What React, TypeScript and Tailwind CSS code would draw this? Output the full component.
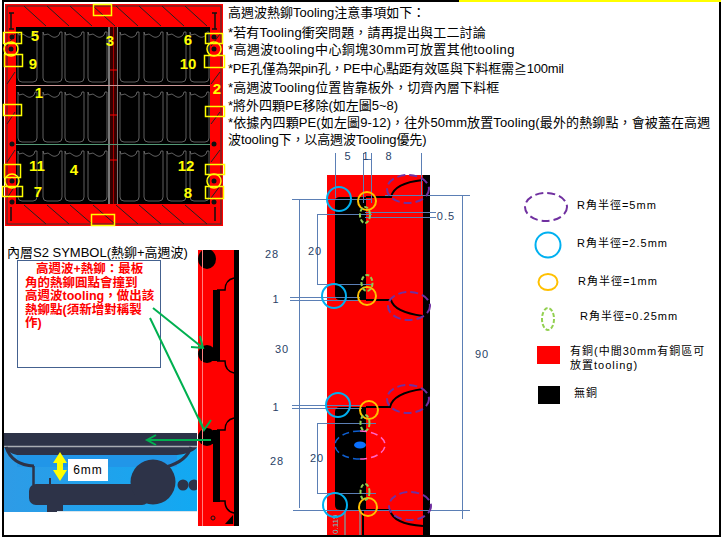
const LINE = "#5b7fb5";

const notes = [
  { text: "*若有Tooling衝突問題，請再提出與工二討論", cls: "mt-[3px] tracking-[0.15px]" },
  { text: "*高週波tooling中心銅塊30mm可放置其他tooling", cls: "tracking-[0.42px]" },
  { text: "*PE孔僅為架pin孔，PE中心點距有效區與下料框需≧100mil", cls: "mt-[2px] tracking-[-0.2px]" },
  { text: "*高週波Tooling位置皆靠板外，切齊內層下料框", cls: "mt-[2px] tracking-[0.17px]" },
  { text: "*將外四顆PE移除(如左圖5~8)", cls: "mt-[1px]" },
  { text: "*依據內四顆PE(如左圖9-12)，往外50mm放置Tooling(最外的熱鉚點，會被蓋在高週", cls: "tracking-[0.12px]" },
  { text: "波tooling下，以高週波Tooling優先)", cls: "tracking-[-0.1px]" },
];

const panelCols = [17, 42, 64, 87, 119, 143, 166, 189];
const panelRows = [31, 91, 150];
const panelRects = [
  [93, 4, 18, 11], [3, 32, 18, 11], [4, 54, 18, 12], [3, 104, 18, 11], [4, 164, 16, 13], [2, 186, 20, 10],
  [205, 33, 17, 10], [204, 55, 20, 12], [205, 106, 19, 10], [205, 164, 19, 10], [205, 186, 18, 12], [91, 214, 23, 11],
];
const panelNums: [string, number, number][] = [
  ["5", 35, 41], ["3", 110, 46], ["6", 188, 45], ["9", 33, 69], ["10", 188, 69], ["1", 39, 98],
  ["2", 217, 94], ["11", 37, 171], ["4", 74, 175], ["12", 186, 171], ["7", 38, 197], ["8", 188, 198],
];

function PanelDrawing() {
  return (
    <svg width="226" height="228" className="-ml-[4px] -mt-[2px] block shrink-0">
      <rect x="5" y="4" width="218" height="222" fill="#ff0000" />
      <rect x="7" y="6" width="214" height="218" fill="none" stroke="#333" strokeWidth="1" />
      {[0, 1, 2, 3, 4, 5, 6, 7].map((i) => (
        <g key={i} stroke="#222" strokeWidth="1">
          <line x1={24 + i * 23} y1="6" x2={46 + i * 23} y2="26" />
          <line x1={24 + i * 23} y1="205" x2={46 + i * 23} y2="224" />
        </g>
      ))}
      {[34, 72, 112, 150, 186].map((y) => (
        <g key={y} stroke="#222" strokeWidth="1">
          <line x1="15" y1={y} x2="7" y2={y + 12} />
          <line x1="220" y1={y} x2="211" y2={y + 12} />
        </g>
      ))}
      <path d="M11 13v16M9 13h5M9 29h5M215 13v16M212 13h5M212 29h5M11 207v14M215 207v14" stroke="#111" strokeWidth="1.5" fill="none" />
      <rect x="16" y="27" width="194" height="177" fill="#000" />
      <rect x="108" y="27" width="10" height="177" fill="#777" />
      <rect x="110" y="27" width="7" height="177" fill="#300" />
      <line x1="113.500" y1="27" x2="113.500" y2="204" stroke="#a00" />
      {[70, 115, 160].map((y) => (
        <line key={y} x1="110" y1={y} x2="117" y2={y} stroke="#f00" />
      ))}
      <line x1="16" y1="85.500" x2="210" y2="85.500" stroke="#c99" />
      <line x1="16" y1="144.500" x2="210" y2="144.500" stroke="#597" />
      {panelRows.map((y) =>
        panelCols.map((x) => (
          <path
            key={`${x}-${y}`}
            d={`M${x + 1} ${y + 1}v46q0 4 4 4h11q4 0 4-4v-46h-2l-1 3q-4 4-8 1l-3-2-4 1-1-3z`}
            fill="none"
            stroke="#777"
            strokeWidth="0.8"
          />
        )),
      )}
      {[17, 124, 182, 17, 124, 182].map((y, i) => (
        <circle key={i} cx={i < 3 ? 12 : 214} cy={y + 20} r="2.500" fill="#111" />
      ))}
      {panelRects.map(([x, y, w, h], i) => (
        <rect key={i} x={x + 0.5} y={y + 0.5} width={w} height={h} fill="none" stroke="#ffff00" strokeWidth="1.500" />
      ))}
      {[[11, 49], [12, 181], [214, 49], [214, 181]].map(([cx, cy], i) => (
        <g key={i}>
          <circle cx={cx} cy={cy} r="2.500" fill="#111" />
          <circle cx={cx} cy={cy} r="7" fill="none" stroke="#ffff00" strokeWidth="1.500" />
        </g>
      ))}
      {panelNums.map(([t, x, y]) => (
        <text key={t} x={x} y={y} textAnchor="middle" fontSize="15" fontWeight="700" fill="#ffff00" fontFamily="'Liberation Sans', sans-serif">
          {t}
        </text>
      ))}
    </svg>
  );
}

function PhotoDrawing() {
  return (
    <svg width="193" height="79" className="block">
      <defs>
        <linearGradient id="photoBlue" x1="0" y1="0" x2="1" y2="0">
          <stop offset="0" stopColor="#2e9be6" />
          <stop offset="1" stopColor="#12a9f2" />
        </linearGradient>
      </defs>
      <rect width="193" height="79" fill="url(#photoBlue)" />
      <rect y="22" x="13" width="160" height="12" fill="#2196e8" />
      <path d="M0 0H193V14Q190 20 173 22H13Q4 20 0 14Z" fill="#2d3348" />
      <line x1="0" y1="13.500" x2="193" y2="13.500" stroke="#a9adb3" strokeWidth="1.500" />
      <path d="M2 14Q8 32 30 33M187 14Q183 28 162 34" fill="none" stroke="#2d3348" strokeWidth="3" />
      <line x1="29.500" y1="33" x2="29.500" y2="52" stroke="#2d3348" strokeWidth="2.500" />
      <rect x="25" y="51" width="120" height="21" rx="7" fill="#2d3348" />
      <circle cx="149" cy="49" r="22.500" fill="#2d3348" />
      <rect x="45" y="45" width="2" height="7" fill="#2d3348" />
      <rect x="43" y="72" width="16" height="7" fill="#2d3348" />
      <circle cx="179" cy="52" r="5.500" fill="#2d3348" />
      <circle cx="190" cy="52" r="5.500" fill="#2d3348" />
      <line x1="53" y1="78.500" x2="193" y2="78.500" stroke="#d8e4ec" />
      <path d="M56 19L63 30H59V37H63L56 48L49 37H53V30H49Z" fill="#ffff00" />
    </svg>
  );
}

function StripDrawing() {
  return (
    <svg width="42" height="277" className="block">
      <rect width="41" height="276" fill="#ff0000" />
      <rect x="36" width="5" height="276" fill="#000" />
      <ellipse cx="9" cy="9" rx="9" ry="10" fill="#000" />
      <circle cx="9" cy="104" r="9" fill="#000" />
      <circle cx="9" cy="187" r="9" fill="#000" />
      <path d="M15 40h7v71h-7zM15 180h7v72h-7z" fill="#000" />
      <path d="M19 40h8q0-10 9-12M19 111h8q0 10 9 12M19 180h8q0-10 9-12M19 251h8q0 10 9 12" fill="none" stroke="#000" strokeWidth="1.500" />
      <line x1="4.500" y1="0" x2="4.500" y2="276" stroke="#ff8080" />
      <circle cx="15" cy="268" r="2" fill="none" stroke="#111" />
      <path d="M27 274l8-9v9z" fill="#000" />
    </svg>
  );
}

function DimText({ x, y, children }: { x: number; y: number; children: string }) {
  return (
    <text x={x} y={y} textAnchor="middle" fontSize="11" letterSpacing="1" fill="#2a3f66" fontFamily="'Liberation Sans', sans-serif">
      {children}
    </text>
  );
}

// origin of this drawing is (262,150) on the page
function DimensionDrawing() {
  const blue = [[77, 49], [72, 146], [76, 255], [73, 355]];
  const orange = [[105, 51], [105, 146], [107, 260], [106, 357]];
  const green = [[103, 65, 5, 8], [105, 133, 5.5, 8], [103, 273, 4.5, 8], [103, 342, 4.5, 8]];
  const purple = [[146, 39], [147, 156], [146, 249], [148, 356]];
  return (
    <svg width="240" height="385" className="block">
      <rect x="65" y="25" width="103" height="360" fill="#ff0000" />
      <rect x="161" y="25" width="7" height="360" fill="#000" />
      <path d="M78 47h26v103H78q-5 0-5-5V52q0-5 5-5zM78 257h26v103H78q-5 0-5-5V262q0-5 5-5z" fill="#000" />
      <path d="M104 47h25q3-14 32-17M104 150h25q3 12 32 16M104 257h24q3-14 33-18M104 360h24q3 14 33 16M101 360v25" fill="none" stroke="#000" strokeWidth="2" />
      <path d="M83 360v25M98 360v25" fill="none" stroke="#55cccc" strokeWidth="1" />
      <text transform="translate(76 384) rotate(-90)" fontSize="8" fill="#55cccc" fontFamily="'Liberation Sans', sans-serif">0.119</text>
      <g stroke={LINE} strokeWidth="1" fill="none">
        <path d="M73.500 3v45M101.500 3v50M109.500 3v50M159.500 3v42M101 9.500h9" />
        <path d="M30 49.500h80M123 45.500h85M37.500 49v309M200.500 45v324M31 360.500h177" />
        <path d="M103 62.500h71M103 67.500h71M55.500 64v70M55 64.500h55M55 134.500h55" />
        <path d="M28 147.500h70M28 150.500h70M30 255.500h70M30 258.500h70" />
        <path d="M55.500 273v70M55 273.500h59M55 343.500h59" />
      </g>
      {blue.map(([cx, cy]) => (
        <circle key={cy} cx={cx} cy={cy} r="12" fill="none" stroke="#00b0f0" strokeWidth="2" />
      ))}
      {orange.map(([cx, cy]) => (
        <circle key={cy} cx={cx} cy={cy} r="9" fill="none" stroke="#ffc000" strokeWidth="2" />
      ))}
      {green.map(([cx, cy, rx, ry]) => (
        <ellipse key={cy} cx={cx} cy={cy} rx={rx} ry={ry} fill="none" stroke="#92d050" strokeWidth="2" strokeDasharray="4 2" />
      ))}
      {purple.map(([cx, cy]) => (
        <ellipse key={cy} cx={cx} cy={cy} rx="21" ry="14" fill="none" stroke="#7030a0" strokeWidth="2" strokeDasharray="8 4" />
      ))}
      <path d="M98 281A25 14 0 0 0 98 309" fill="none" stroke="#0f5fd0" strokeWidth="1.500" strokeDasharray="7 4" />
      <path d="M98 281A25 14 0 0 1 98 309" fill="none" stroke="#ff66cc" strokeWidth="1.500" strokeDasharray="7 4" />
      <ellipse cx="98" cy="295" rx="6" ry="3.500" fill="#0a70ff" />
      <DimText x={86} y={10}>5</DimText>
      <DimText x={104} y={10}>1</DimText>
      <DimText x={127} y={10}>8</DimText>
      <DimText x={184} y={70}>0.5</DimText>
      <DimText x={10} y={108}>28</DimText>
      <DimText x={53} y={105}>20</DimText>
      <DimText x={14} y={153}>1</DimText>
      <DimText x={20} y={203}>30</DimText>
      <DimText x={14} y={261}>1</DimText>
      <DimText x={15} y={315}>28</DimText>
      <DimText x={55} y={312}>20</DimText>
      <DimText x={220} y={208}>90</DimText>
    </svg>
  );
}

function Legend() {
  return (
    <div className="flex w-[190px] flex-col text-[11px] leading-[14px] tracking-[1px] whitespace-nowrap text-black">
      <div className="flex h-[30px] items-center">
        <svg width="46" height="30" className="shrink-0">
          <ellipse cx="23" cy="15" rx="21" ry="14" fill="none" stroke="#7030a0" strokeWidth="2" strokeDasharray="8 4" />
        </svg>
        <span className="ml-[8px] -translate-y-[2px]">R角半徑=5mm</span>
      </div>
      <div className="mt-[9px] flex h-[28px] items-center">
        <svg width="46" height="28" className="shrink-0">
          <circle cx="25" cy="14" r="12.500" fill="none" stroke="#00b0f0" strokeWidth="2" />
        </svg>
        <span className="ml-[8px] -translate-y-[2px]">R角半徑=2.5mm</span>
      </div>
      <div className="mt-[13px] flex h-[20px] items-center">
        <svg width="46" height="20" className="shrink-0">
          <ellipse cx="25" cy="10" rx="9.500" ry="8" fill="none" stroke="#ffc000" strokeWidth="2" />
        </svg>
        <span className="ml-[9px] -translate-y-[1px]">R角半徑=1mm</span>
      </div>
      <div className="mt-[14px] flex h-[26px] items-center">
        <svg width="46" height="26" className="shrink-0">
          <ellipse cx="25" cy="13" rx="6" ry="11" fill="none" stroke="#92d050" strokeWidth="2" strokeDasharray="4 2" />
        </svg>
        <span className="ml-[11px] -translate-y-[3px]">R角半徑=0.25mm</span>
      </div>
      <div className="mt-[12px] flex items-start">
        <div className="ml-[14px] mt-[2px] h-[18px] w-[23px] shrink-0 bg-[#ff0000]" />
        <span className="ml-[10px]">
          有銅(中間30mm有銅區可
          <br />
          放置tooling)
        </span>
      </div>
      <div className="mt-[14px] flex items-center">
        <div className="ml-[15px] h-[18px] w-[22px] shrink-0 bg-black" />
        <span className="ml-[14px] -translate-y-[2px]">無銅</span>
      </div>
    </div>
  );
}

function LeftColumn() {
  return (
    <div className="flex w-[224px] shrink-0 flex-col">
      <PanelDrawing />
      <div className="ml-[3px] mt-[17px] text-[13px] leading-[16px] whitespace-nowrap">內層S2 SYMBOL(熱鉚+高週波)</div>
      <div className="ml-[13px] -mt-[1px] h-[108px] w-[144px] border border-[#44618f] pl-[7px] pt-[2px] text-[12.500px] leading-[13.500px] font-bold whitespace-nowrap text-[#ff0000]">
        <span className="ml-[11px]">高週波+熱鉚：最板</span>
        <br />角的熱鉚圓點會撞到
        <br />高週波tooling，做出該
        <br />熱鉚點(須新增對稱製
        <br />作)
      </div>
      <div className="relative mt-[65px] h-[79px] w-[193px]">
        <PhotoDrawing />
        <div className="absolute left-[64px] top-[26px] flex h-[22px] w-[40px] items-center justify-center bg-white text-[12px] tracking-[1px]">6mm</div>
      </div>
    </div>
  );
}

export default function App() {
  return (
    <div className="relative h-[537px] w-[721px] overflow-hidden bg-white font-['Liberation_Sans','Noto_Sans_CJK_TC',sans-serif] text-black">
      <div className="ml-[2px] flex h-[537px] w-[719px] border-2 border-black">
        <LeftColumn />
        <div className="flex min-w-0 flex-1 flex-col">
          <div className="pt-[2px] text-[13px] leading-[17px] whitespace-nowrap">
            <div>高週波熱鉚Tooling注意事項如下：</div>
            {notes.map((n) => (
              <div key={n.text} className={n.cls}>
                {n.text}
              </div>
            ))}
          </div>
          <div className="mt-[2px] flex">
            <div className="ml-[34px] shrink-0">
              <DimensionDrawing />
            </div>
            <div className="ml-[21px] mt-[42px]">
              <Legend />
            </div>
          </div>
        </div>
      </div>
      <div className="absolute left-[459px] top-0 h-[2px] w-[262px] bg-[#ffff00]" />
      {/* strip and arrows lie over the photo */}
      <div className="absolute left-[198px] top-[250px]">
        <StripDrawing />
      </div>
      <svg width="240" height="537" className="pointer-events-none absolute left-0 top-0">
        <g stroke="#00b050" strokeWidth="2" fill="none">
          <path d="M153 308L203 348M191 347l12 1-3-12" />
          <path d="M150 318L204 430M199 418l5 12 7-10" />
          <path d="M211 440H147M156 435l-9 5 9 5" />
        </g>
      </svg>
    </div>
  );
}
